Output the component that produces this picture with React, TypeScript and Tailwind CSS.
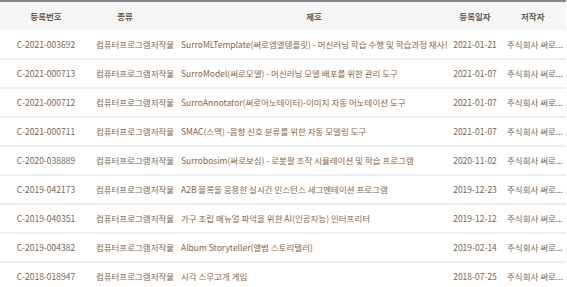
const rows = [
  ["C-2021-003692", "SurroMLTemplate(써로엠엘템플릿) - 머신러닝 학습 수행 및 학습과정 재사용", "2021-01-21"],
  ["C-2021-000713", "SurroModel(써로모델) - 머신러닝 모델 배포를 위한 관리 도구", "2021-01-07"],
  ["C-2021-000712", "SurroAnnotator(써로어노테이터)-이미지 자동 어노테이션 도구", "2021-01-07"],
  ["C-2021-000711", "SMAC(스맥) -음향 신호 분류를 위한 자동 모델링 도구", "2021-01-07"],
  ["C-2020-038889", "Surrobosim(써로보심) - 로봇팔 조작 시뮬레이션 및 학습 프로그램", "2020-11-02"],
  ["C-2019-042173", "A2B 블록을 응용한 실시간 인스턴스 세그멘테이션 프로그램", "2019-12-23"],
  ["C-2019-040351", "가구 조립 매뉴얼 파악을 위한 AI(인공지능) 인터프리터", "2019-12-12"],
  ["C-2019-004382", "Album Storyteller(앨범 스토리텔러)", "2019-02-14"],
  ["C-2018-018947", "시각 스무고개 게임", "2018-07-25"],
];

export default function App() {
  return (
    <div className="w-[567px] h-[287px] overflow-hidden bg-white font-['Noto_Sans_CJK_KR',sans-serif] text-[8.5px] text-[#7a6652]">
      <table className="table-fixed border-collapse w-[566px] border-t-2 border-[#8a8a8a]">
        <colgroup>
          <col className="w-[92px]" />
          <col className="w-[86px]" />
          <col className="w-[272px]" />
          <col className="w-[50px]" />
          <col className="w-[66px]" />
        </colgroup>
        <thead>
          <tr className="h-[29px] bg-[#f6f6f6] text-[#6b5a48]">
            <th className="font-bold">등록번호</th>
            <th className="font-bold pr-[20px]">종류</th>
            <th className="font-bold">제호</th>
            <th className="font-bold">등록일자</th>
            <th className="font-bold text-left pl-[21px]">저작자</th>
          </tr>
        </thead>
        <tbody>
          {rows.map(([no, title, date]) => (
            <tr key={no} className="h-[29px] border-b-2 border-[#eeeeee]">
              <td className="text-center whitespace-nowrap">{no}</td>
              <td className="text-center whitespace-nowrap">컴퓨터프로그램저작물</td>
              <td className="pl-[3px]">
                <div className="w-[266px] whitespace-nowrap overflow-hidden text-[#8a6540]">{title}</div>
              </td>
              <td className="text-center whitespace-nowrap">{date}</td>
              <td className="pl-[7px] whitespace-nowrap overflow-hidden">주식회사 써로...</td>
            </tr>
          ))}
        </tbody>
      </table>
    </div>
  );
}
